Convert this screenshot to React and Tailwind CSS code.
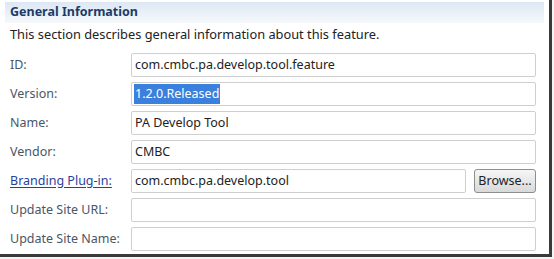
const rows = [
  { label: 'ID:', value: 'com.cmbc.pa.develop.tool.feature' },
  { label: 'Version:', value: '1.2.0.Released', selected: true },
  { label: 'Name:', value: 'PA Develop Tool' },
  { label: 'Vendor:', value: 'CMBC' },
  { label: 'Branding Plug-in:', value: 'com.cmbc.pa.develop.tool', link: true, browse: true },
  { label: 'Update Site URL:', value: '' },
  { label: 'Update Site Name:', value: '' },
]

function Field({ row }) {
  return (
    <div className="flex items-center h-[24px] gap-[8px]">
      <div className="w-[123px] shrink-0 pl-[10px]">
        {row.link ? (
          <span className="text-[#2b3f9a] underline underline-offset-2">{row.label}</span>
        ) : (
          <span className="text-[#4a5666]">{row.label}</span>
        )}
      </div>
      <div className="flex-1 flex items-center gap-[8px] pr-[13px]">
        <div className="flex-1 h-[24px] border border-[#cfcfcf] rounded-[2px] bg-white flex items-center pl-[2px] text-[#222]">
          {row.selected ? (
            <span className="bg-[#3a80dc] text-white px-[1px] leading-[20px]">{row.value}</span>
          ) : (
            <span className="pl-[1px]">{row.value}</span>
          )}
        </div>
        {row.browse && (
          <button className="w-[62px] h-[24px] rounded-[3px] border border-[#8e8e8e] bg-gradient-to-b from-[#f6f6f6] to-[#d9d9d9] text-[#222] text-[12.5px]">
            Browse...
          </button>
        )}
      </div>
    </div>
  )
}

export default function App() {
  return (
    <div className="w-[554px] h-[259px] bg-[#f4f4f4] overflow-hidden" style={{ fontFamily: '"Noto Sans", "Open Sans", sans-serif' }}>
      <div className="w-[552px] h-[257px] bg-white border-r-[3px] border-b-[3px] border-[#3a3a3a] flex flex-col text-[12.5px]">
        <div className="mx-[5px] mt-[2px] h-[21px] bg-gradient-to-b from-[#dde7f3] to-[#f6f9fc] flex items-center pl-[5px]">
          <span className="font-bold text-[#1d3b66] text-[12.5px]">General Information</span>
        </div>
        <div className="pl-[10px] mt-[2px] text-[#222] leading-[18px] text-[12.8px]">This section describes general information about this feature.</div>
        <div className="flex flex-col gap-[5px] mt-[10px]">
          {rows.map(r => <Field key={r.label} row={r} />)}
        </div>
      </div>
    </div>
  )
}
